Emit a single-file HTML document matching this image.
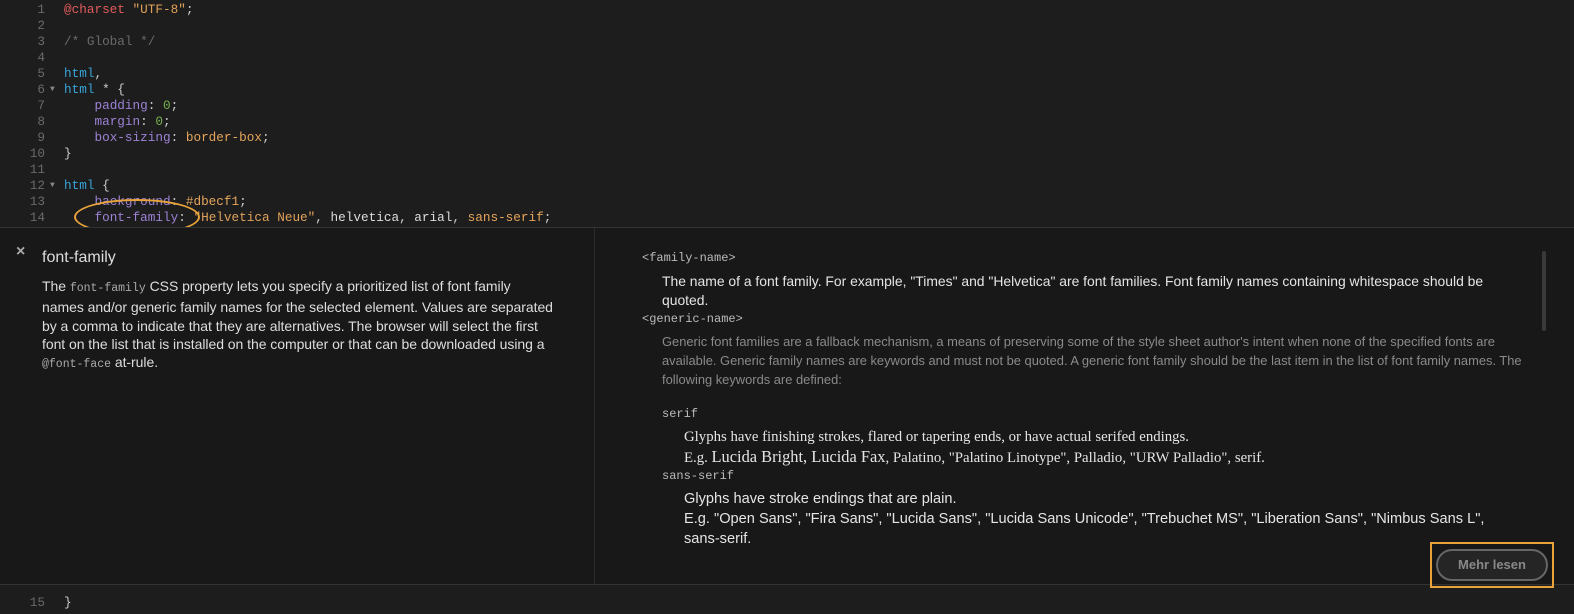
<!DOCTYPE html>
<html><head><meta charset="utf-8"><style>
body{margin:0;width:1574px;height:614px;background:#1d1d1d;overflow:hidden;position:relative;font-family:"Liberation Sans",sans-serif}
.code{position:absolute;left:0;top:2px;font-family:"Liberation Mono",monospace;font-size:12.7px;line-height:16px;color:#ccc}
.ln{position:absolute;left:0;width:45px;text-align:right;color:#6a6a6a}
.tx{position:absolute;left:64px;white-space:pre}
.tri{position:absolute;left:50px;color:#888;font-size:8px}
.k{color:#36a3d9}.p{color:#9d82d6}.n{color:#75b350}.s{color:#e0a15a}.c{color:#6a6a6a}.a{color:#e35b5b}.v{color:#e6a55c}.w{color:#ddd}
.panel{position:absolute;left:0;top:227px;width:1574px;height:356px;background:#181818;border-top:1px solid #333;border-bottom:1px solid #333}
.div{position:absolute;left:594px;top:0;width:1px;height:356px;background:#2c2c2c}
.mono{font-family:"Liberation Mono",monospace}
.nw{white-space:nowrap}
</style></head><body>
<div class="code">
<div style="position:relative;height:16px"><span class="ln">1</span><span class="tx"><span class="a">@charset</span> <span class="s">"UTF-8"</span>;</span></div>
<div style="position:relative;height:16px"><span class="ln">2</span></div>
<div style="position:relative;height:16px"><span class="ln">3</span><span class="tx c">/* Global */</span></div>
<div style="position:relative;height:16px"><span class="ln">4</span></div>
<div style="position:relative;height:16px"><span class="ln">5</span><span class="tx"><span class="k">html</span>,</span></div>
<div style="position:relative;height:16px"><span class="ln">6</span><span class="tri">▼</span><span class="tx"><span class="k">html</span> * {</span></div>
<div style="position:relative;height:16px"><span class="ln">7</span><span class="tx">    <span class="p">padding</span>: <span class="n">0</span>;</span></div>
<div style="position:relative;height:16px"><span class="ln">8</span><span class="tx">    <span class="p">margin</span>: <span class="n">0</span>;</span></div>
<div style="position:relative;height:16px"><span class="ln">9</span><span class="tx">    <span class="p">box-sizing</span>: <span class="v">border-box</span>;</span></div>
<div style="position:relative;height:16px"><span class="ln">10</span><span class="tx">}</span></div>
<div style="position:relative;height:16px"><span class="ln">11</span></div>
<div style="position:relative;height:16px"><span class="ln">12</span><span class="tri">▼</span><span class="tx"><span class="k">html</span> {</span></div>
<div style="position:relative;height:16px"><span class="ln">13</span><span class="tx">    <span class="p">background</span>: <span class="v">#dbecf1</span>;</span></div>
<div style="position:relative;height:16px"><span class="ln">14</span><span class="tx">    <span class="p">font-family</span>: <span class="s">"Helvetica Neue"</span>, <span class="w">helvetica</span>, <span class="w">arial</span>, <span class="v">sans-serif</span>;</span></div>
</div>
<div style="position:absolute;left:74px;top:199px;width:126px;height:36px;border:2px solid #e8a33a;border-radius:50%;box-sizing:border-box"></div>
<div class="panel">
<div class="div"></div>
<div style="position:absolute;left:16px;top:15px;color:#aaa;font-size:16px;font-weight:bold">×</div>
<div style="position:absolute;left:42px;top:21px;color:#ddd;font-size:16px">font-family</div>
<div class="nw" style="position:absolute;left:42px;top:49px;color:#ddd;font-size:14px;line-height:18.3px;letter-spacing:-0.05px">The <span class="mono" style="color:#aaa;font-size:11.5px;letter-spacing:0">font-family</span> CSS property lets you specify a prioritized list of font family<br>names and/or generic family names for the selected element. Values are separated<br>by a comma to indicate that they are alternatives. The browser will select the first<br>font on the list that is installed on the computer or that can be downloaded using a<br><span class="mono" style="color:#aaa;font-size:11.5px;letter-spacing:0">@font-face</span> at-rule.</div>
<div class="mono" style="position:absolute;left:642px;top:23px;color:#bbb;font-size:12px">&lt;family-name&gt;</div>
<div class="nw" style="position:absolute;left:662px;top:44px;color:#e5e5e5;font-size:13.9px;line-height:19px">The name of a font family. For example, "Times" and "Helvetica" are font families. Font family names containing whitespace should be<br>quoted.</div>
<div class="mono" style="position:absolute;left:642px;top:84px;color:#bbb;font-size:12px">&lt;generic-name&gt;</div>
<div class="nw" style="position:absolute;left:662px;top:104px;color:#8a8a8a;font-size:12.9px;line-height:19px">Generic font families are a fallback mechanism, a means of preserving some of the style sheet author's intent when none of the specified fonts are<br>available. Generic family names are keywords and must not be quoted. A generic font family should be the last item in the list of font family names. The<br>following keywords are defined:</div>
<div class="mono" style="position:absolute;left:662px;top:179px;color:#bbb;font-size:12px">serif</div>
<div class="nw" style="position:absolute;left:684px;top:199px;color:#e5e5e5;font-family:'Liberation Serif',serif;font-size:14.8px;line-height:20px">Glyphs have finishing strokes, flared or tapering ends, or have actual serifed endings.<br>E.g. <span style="font-size:16.4px">Lucida Bright, Lucida Fax</span>, Palatino, "Palatino Linotype", Palladio, "URW Palladio", serif.</div>
<div class="mono" style="position:absolute;left:662px;top:241px;color:#bbb;font-size:12px">sans-serif</div>
<div class="nw" style="position:absolute;left:684px;top:261px;color:#e5e5e5;font-size:14.6px;line-height:20px">Glyphs have stroke endings that are plain.<br>E.g. "Open Sans", "Fira Sans", "Lucida Sans", "Lucida Sans Unicode", "Trebuchet MS", "Liberation Sans", "Nimbus Sans L",<br>sans-serif.</div>
<div style="position:absolute;left:1542px;top:23px;width:4px;height:80px;background:#3a3a3a;border-radius:2px"></div>
</div>
<div style="position:absolute;left:1430px;top:542px;width:124px;height:46px;border:2px solid #e8a33a;box-sizing:border-box"></div>
<div style="position:absolute;left:1436px;top:549px;width:112px;height:32px;border:2px solid #666;border-radius:16px;box-sizing:border-box;background:#252525;color:#888;font-size:13px;font-weight:bold;text-align:center;line-height:28px">Mehr lesen</div>
<div class="code" style="top:595px"><div style="position:relative;height:16px"><span class="ln">15</span><span class="tx">}</span></div></div>
</body></html>
